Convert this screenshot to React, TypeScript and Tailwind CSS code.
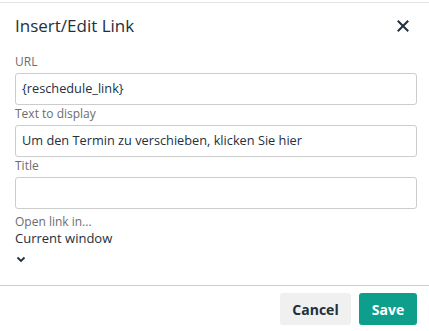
import React from "react";

const Field = ({label, value}: {label: string, value?: string}) => {
    return (
        <div className="flex flex-col">
            <label className="text-[12px] leading-[18px] text-[#6d6d6d] mb-[2px]">{label}</label>
            <div className="h-[32px] w-full rounded-[3px] border border-[#cccccc] px-[6px] flex items-center text-[12.75px] text-[#222f3e]">
                {value}
            </div>
        </div>
    )
}

const App = () => {
    return (
        <div className="w-[429px] h-[331px] bg-white overflow-hidden flex flex-col" style={{fontFamily: '"Open Sans", "Noto Sans", sans-serif'}}>
            <div className="h-[3px] border-b border-[#e3e3e3]"/>
            <div className="flex items-center justify-between pl-[15px] pr-[20px] pt-[11px]">
                <h1 className="text-[17px] leading-[24px] text-[#222f3e]">Insert/Edit Link</h1>
                <svg width="12" height="12" viewBox="0 0 12 12" className="text-[#222f3e]">
                    <path d="M1.5 1.5 L10.5 10.5 M10.5 1.5 L1.5 10.5" stroke="currentColor" strokeWidth="2" strokeLinecap="square"/>
                </svg>
            </div>
            <div className="flex flex-col px-[15px] pr-[12px] pt-[15px]">
                <Field label="URL" value="{reschedule_link}"/>
                <Field label="Text to display" value="Um den Termin zu verschieben, klicken Sie hier"/>
                <Field label="Title"/>
                <div className="flex flex-col pt-[5px]">
                    <span className="text-[12px] leading-[16px] text-[#6d6d6d]">Open link in...</span>
                    <span className="text-[13px] leading-[17px] text-[#222f3e]">Current window</span>
                    <svg width="10" height="8" viewBox="0 0 10 8" className="mt-[9px] ml-[1px] text-[#222f3e]">
                        <path d="M1.5 1.5 L5 5 L8.5 1.5" stroke="currentColor" strokeWidth="1.8" fill="none"/>
                    </svg>
                </div>
            </div>
            <div className="mt-auto border-t border-[#cccccc] flex justify-end gap-[8px] pr-[12px] pt-[7px] pb-[6px]">
                <button className="h-[32px] w-[71px] rounded-[3px] bg-[#f0f0f0] text-[14px] font-bold text-[#222f3e]">Cancel</button>
                <button className="h-[32px] w-[58px] rounded-[3px] bg-[#0e9e8c] text-[14px] font-bold text-white">Save</button>
            </div>
        </div>
    )
}

export default App
